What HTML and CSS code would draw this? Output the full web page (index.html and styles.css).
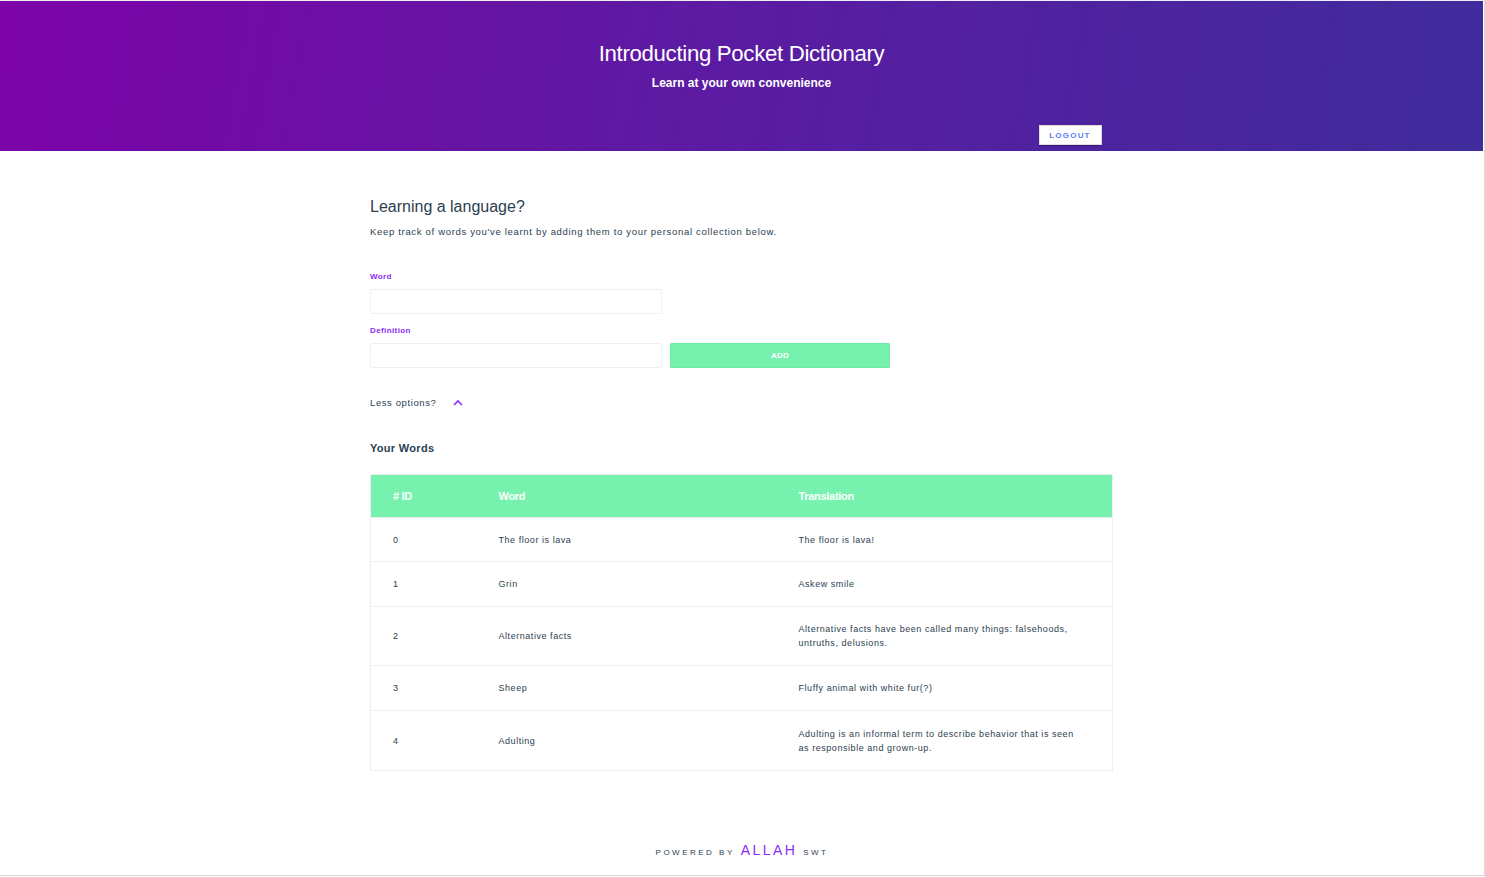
FILE: index.html
```html
<!DOCTYPE html>
<html>
<head>
<meta charset="utf-8">
<link rel="stylesheet" href="styles.css">
</head>
<body>
<div class="frame">
  <header class="hero">
    <h1 class="hero-title">Introducting Pocket Dictionary</h1>
    <p class="hero-sub">Learn at your own convenience</p>
    <div class="hero-actions">
      <button class="logout">LOGOUT</button>
    </div>
  </header>
  <main class="content">
    <h2 class="title">Learning a language?</h2>
    <p class="lead">Keep track of words you've learnt by adding them to your personal collection below.</p>
    <form class="form">
      <label class="label">Word</label>
      <div class="row">
        <input class="input" type="text">
      </div>
      <label class="label">Definition</label>
      <div class="row">
        <input class="input" type="text">
        <button type="button" class="add">ADD</button>
      </div>
    </form>
    <div class="options">
      <span>Less options?</span>
      <svg class="chev" width="10" height="7" viewBox="0 0 10 7"><path d="M1 6 L5 2 L9 6" fill="none" stroke="#8b2cf5" stroke-width="1.6"/></svg>
    </div>
    <h3 class="subtitle">Your Words</h3>
    <table class="words">
      <thead>
        <tr><th class="c1"># ID</th><th class="c2">Word</th><th class="c3">Translation</th></tr>
      </thead>
      <tbody>
        <tr class="r1"><td>0</td><td>The floor is lava</td><td>The floor is lava!</td></tr>
        <tr class="r2"><td>1</td><td>Grin</td><td>Askew smile</td></tr>
        <tr class="r3"><td>2</td><td>Alternative facts</td><td>Alternative facts have been called many things: falsehoods, untruths, delusions.</td></tr>
        <tr class="r2"><td>3</td><td>Sheep</td><td>Fluffy animal with white fur(?)</td></tr>
        <tr class="r3"><td>4</td><td>Adulting</td><td>Adulting is an informal term to describe behavior that is seen as responsible and grown-up.</td></tr>
      </tbody>
    </table>
  </main>
  <footer class="footer">
    <span class="small">POWERED BY</span>
    <span class="big">ALLAH</span>
    <span class="small">SWT</span>
  </footer>
</div>
</body>
</html>
```
FILE: styles.css
```css
* { box-sizing: border-box; }
html, body { margin: 0; padding: 0; background: #fff; }
body { font-family: "Liberation Sans", Arial, sans-serif; color: #2c3e50; }
.frame {
  width: 1485px;
  height: 876px;
  border-top: 1px solid #eef0f2;
  border-right: 1px solid #d8d8d8;
  border-bottom: 1px solid #d8d8d8;
  display: flex;
  flex-direction: column;
}
.hero {
  height: 150px;
  width: 1483px;
  background: linear-gradient(100deg, #7d03a8 0%, #5d1aa2 45%, #3f2b9c 100%);
  color: #fff;
  display: flex;
  flex-direction: column;
  align-items: center;
  padding-top: 40px;
}
.hero-title {
  margin: 0;
  font-weight: 400;
  font-size: 22.2px;
  line-height: 26px;
  letter-spacing: -0.3px;
}
.hero-sub {
  margin: 9px 0 0;
  font-weight: 700;
  font-size: 12px;
  line-height: 14px;
}
.hero-actions {
  width: 742px;
  display: flex;
  justify-content: flex-end;
  padding-right: 11px;
  margin-top: 35px;
}
.logout {
  width: 63px;
  height: 20px;
  background: #fff;
  border: 1px solid #ddd;
  color: #5b7ff0;
  font-family: "Liberation Sans", Arial, sans-serif;
  font-weight: 700;
  font-size: 8px;
  letter-spacing: 1.2px;
  padding: 0;
  box-shadow: 0 1px 1px rgba(0,0,0,0.25);
}
.content {
  width: 743px;
  margin-left: 370px;
  padding-top: 46px;
}
.title {
  margin: 0;
  font-weight: 400;
  font-size: 16px;
  line-height: 20px;
  color: #2c3e50;
}
.lead {
  margin: 9px 0 0;
  font-size: 9.5px;
  line-height: 12px;
  letter-spacing: 0.68px;
}
.form { margin-top: 34px; display: flex; flex-direction: column; }
.label {
  display: block;
  font-size: 8px;
  font-weight: 700;
  color: #8b2cf5;
  letter-spacing: 0.4px;
  line-height: 10px;
  margin-bottom: 7px;
}
.row { display: flex; gap: 8px; margin-bottom: 12px; }
.input {
  width: 292px;
  height: 25px;
  border: 1px solid #efefef;
  border-radius: 2px;
  background: #fff;
  margin: 0;
}
.add {
  width: 220px;
  height: 25px;
  background: #76f2ae;
  border: 1px solid #6eeaa6;
  border-radius: 1px;
  color: #fff;
  font-family: "Liberation Sans", Arial, sans-serif;
  font-weight: 700;
  font-size: 8px;
  letter-spacing: 0.3px;
  padding: 0;
}
.options {
  display: flex;
  align-items: center;
  gap: 17px;
  font-size: 9.5px;
  letter-spacing: 0.6px;
  margin-top: 17px;
  line-height: 12px;
}
.chev { margin-top: -1px; }
.subtitle {
  margin: 32px 0 0;
  font-size: 11px;
  font-weight: 700;
  letter-spacing: 0.3px;
  line-height: 14px;
}
.words {
  margin-top: 19px;
  width: 743px;
  border-collapse: collapse;
  border: 1px solid #eceeef;
  table-layout: fixed;
}
.words th {
  background: #76f2ae;
  color: #fff;
  height: 43px;
  text-align: left;
  font-family: "Liberation Sans Narrow", "Liberation Sans", Arial, sans-serif;
  font-weight: 700;
  font-size: 11px;
  letter-spacing: -0.3px;
  padding: 0 0 0 22px;
}
.c1 { width: 106px; }
.c2 { width: 300px; }
.words td {
  font-size: 9px;
  letter-spacing: 0.55px;
  line-height: 14px;
  padding: 0 28px 0 22px;
  border-top: 1px solid #eceeef;
  vertical-align: middle;
}
.r1 td { height: 44px; }
.r2 td { height: 45px; }
.r3 td { height: 59px; }
.words tbody tr:last-child td { height: 60px; }
.footer {
  margin-top: auto;
  margin-bottom: 17px;
  display: flex;
  justify-content: center;
  align-items: baseline;
  gap: 6px;
}
.small {
  font-size: 8px;
  letter-spacing: 2.5px;
  color: #2c3e50;
}
.big {
  font-size: 14px;
  letter-spacing: 2.4px;
  color: #8b2cf5;
}
```
